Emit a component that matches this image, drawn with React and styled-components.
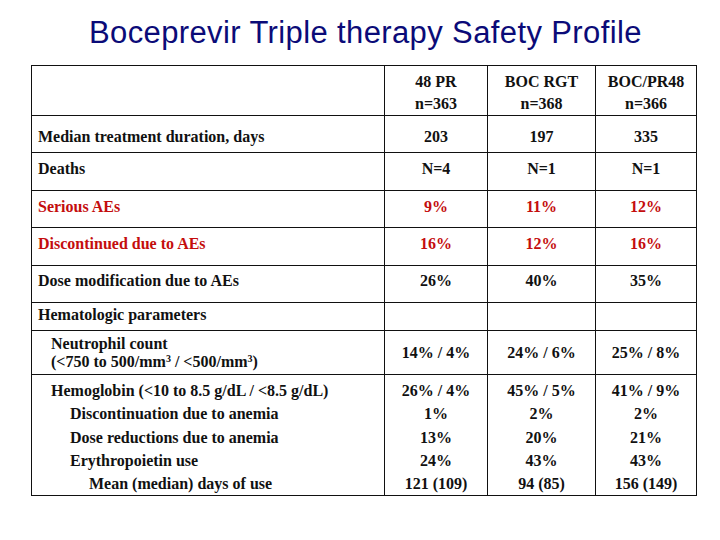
import React from "react";
import styled, { createGlobalStyle } from "styled-components";

const Global = createGlobalStyle`
  html, body { margin: 0; padding: 0; background: #fff; }
  body { width: 720px; height: 540px; overflow: hidden; }
`;

const Page = styled.div`
  width: 720px;
  height: 540px;
  background: #fff;
  display: flex;
  flex-direction: column;
  align-items: flex-start;
`;

const Title = styled.h1`
  margin: 0;
  padding: 16px 0 0 89px;
  font-family: "Liberation Sans", Arial, sans-serif;
  font-weight: normal;
  font-size: 31px;
  letter-spacing: 0.38px;
  line-height: 34px;
  color: #0b0b78;
  white-space: nowrap;
`;

const Table = styled.table`
  margin: 15px 0 0 31px;
  border-collapse: collapse;
  table-layout: fixed;
  font-family: "Liberation Serif", "Times New Roman", serif;
  font-weight: bold;
  font-size: 16px;
  color: #111;
`;

const Row = styled.tr`
  height: ${(p) => p.$h}px;
`;

const Cell = styled.td`
  border: 1px solid #111;
  padding: ${(p) => p.$pt || 0}px 0 0 0;
  vertical-align: ${(p) => (p.$top ? "top" : "middle")};
  text-align: center;
  line-height: ${(p) => p.$lh || 18}px;
  color: ${(p) => (p.$red ? "#c40d0d" : "#111")};
  white-space: nowrap;
`;

const Label = styled(Cell)`
  text-align: left;
  padding-left: ${(p) => p.$indent || 6}px;
`;

const Line = styled.div`
  padding-left: ${(p) => p.$indent || 0}px;
`;

const Sup = styled.sup`
  font-size: 10px;
  line-height: 0;
  vertical-align: 5px;
`;

const simpleRows = [
  { label: "Median treatment duration, days", vals: ["203", "197", "335"], pt: 12, h: 37 },
  { label: "Deaths", vals: ["N=4", "N=1", "N=1"], pt: 7, h: 38 },
  { label: "Serious AEs", vals: ["9%", "11%", "12%"], pt: 7, h: 37, red: true },
  { label: "Discontinued due to AEs", vals: ["16%", "12%", "16%"], pt: 7, h: 38, red: true },
  { label: "Dose modification due to AEs", vals: ["26%", "40%", "35%"], pt: 6, h: 37 },
];

const hemo = [
  ["26% / 4%", "1%", "13%", "24%", "121 (109)"],
  ["45% / 5%", "2%", "20%", "43%", "94 (85)"],
  ["41% / 9%", "2%", "21%", "43%", "156 (149)"],
];

export default function App() {
  return (
    <Page>
      <Global />
      <Title>Boceprevir Triple therapy Safety Profile</Title>
      <Table>
        <colgroup>
          <col style={{ width: 353 }} />
          <col style={{ width: 103 }} />
          <col style={{ width: 108 }} />
          <col style={{ width: 101 }} />
        </colgroup>
        <tbody>
          <Row $h={50}>
            <Cell />
            <Cell $lh={22} $pt={4}>48 PR<br />n=363</Cell>
            <Cell $lh={22} $pt={4}>BOC RGT<br />n=368</Cell>
            <Cell $lh={22} $pt={4}>BOC/PR48<br />n=366</Cell>
          </Row>
          {simpleRows.map((r) => (
            <Row key={r.label} $h={r.h}>
              <Label $top $pt={r.pt} $red={r.red}>{r.label}</Label>
              {r.vals.map((v, j) => (
                <Cell key={j} $top $pt={r.pt} $red={r.red}>{v}</Cell>
              ))}
            </Row>
          ))}
          <Row $h={28}>
            <Label $top $pt={3}>Hematologic parameters</Label>
            <Cell />
            <Cell />
            <Cell />
          </Row>
          <Row $h={44}>
            <Label $indent={19}>
              Neutrophil count
              <br />
              (&lt;750 to 500/mm<Sup>3</Sup> / &lt;500/mm<Sup>3</Sup>)
            </Label>
            <Cell $pt={1}>14% / 4%</Cell>
            <Cell $pt={1}>24% / 6%</Cell>
            <Cell $pt={1}>25% / 8%</Cell>
          </Row>
          <Row $h={119}>
            <Label $indent={19} $lh={23.25} $pt={4}>
              <Line>Hemoglobin (&lt;10 to 8.5 g/dL / &lt;8.5 g/dL)</Line>
              <Line $indent={19}>Discontinuation due to anemia</Line>
              <Line $indent={19}>Dose reductions due to anemia</Line>
              <Line $indent={19}>Erythropoietin use</Line>
              <Line $indent={38}>Mean (median) days of use</Line>
            </Label>
            {hemo.map((col, j) => (
              <Cell key={j} $lh={23.25} $pt={4}>
                {col.map((v, k) => (
                  <Line key={k}>{v}</Line>
                ))}
              </Cell>
            ))}
          </Row>
        </tbody>
      </Table>
    </Page>
  );
}
